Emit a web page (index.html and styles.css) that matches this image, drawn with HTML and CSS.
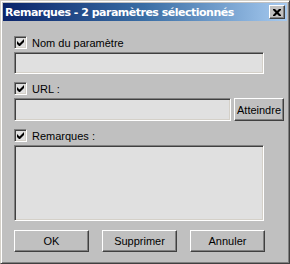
FILE: index.html
```html
<!DOCTYPE html>
<html lang="fr">
<head>
  <meta charset="UTF-8" />
  <title>Remarques</title>
  <link rel="stylesheet" href="styles.css">
</head>
<body>
  <div class="window">
    <div class="titlebar">
      <span class="title">Remarques - 2 paramètres sélectionnés</span>
      <span class="close">
        <svg width="8" height="7" viewBox="0 0 8 7"><path d="M0 0h2l2 2 2-2h2v1l-2.5 2.5L8 6v1H6L4 5 2 7H0V6l2.5-2.5L0 1z" fill="#000"/></svg>
      </span>
    </div>

    <div class="content">
      <div class="check-row">
        <span class="checkbox"><svg width="7" height="7" viewBox="0 0 7 7"><path d="M0 2v3l2 2h1l4-4V0L2.5 4.5z" fill="#000"/></svg></span>
        <span>Nom du paramètre</span>
      </div>
      <div class="field wide"></div>

      <div class="check-row spaced">
        <span class="checkbox"><svg width="7" height="7" viewBox="0 0 7 7"><path d="M0 2v3l2 2h1l4-4V0L2.5 4.5z" fill="#000"/></svg></span>
        <span>URL :</span>
      </div>
      <div class="url-row">
        <div class="field url"></div>
        <button class="btn small">Atteindre</button>
      </div>

      <div class="check-row spaced">
        <span class="checkbox"><svg width="7" height="7" viewBox="0 0 7 7"><path d="M0 2v3l2 2h1l4-4V0L2.5 4.5z" fill="#000"/></svg></span>
        <span>Remarques :</span>
      </div>
      <div class="field wide notes"></div>

      <div class="actions">
        <button class="btn">OK</button>
        <button class="btn">Supprimer</button>
        <button class="btn">Annuler</button>
      </div>
    </div>
  </div>
</body>
</html>
```

FILE: styles.css
```css
* {
  box-sizing: border-box;
}

body {
  margin: 0;
  background: #c0c0c0;
  font-family: 'Liberation Sans', Arial, sans-serif;
  font-size: 11px;
  color: #000;
}

.window {
  width: 290px;
  height: 264px;
  padding: 2px;
  background: #c0c0c0;
  border: 1px solid;
  border-color: #d4d0c8 #404040 #404040 #d4d0c8;
  box-shadow: inset 1px 1px #fff, inset -1px -1px #808080;
}

.titlebar {
  height: 18px;
  display: flex;
  align-items: center;
  justify-content: space-between;
  padding: 0 2px 0 2px;
  background: linear-gradient(90deg, #0a246a 0%, #3a6ea5 50%, #a6caf0 100%);
}

.title {
  color: #fff;
  font-family: 'DejaVu Sans', Verdana, sans-serif;
  font-weight: bold;
  font-size: 11px;
  letter-spacing: -0.5px;
  white-space: nowrap;
}

.close {
  width: 16px;
  height: 14px;
  display: flex;
  align-items: center;
  justify-content: center;
  background: #c0c0c0;
  border: 1px solid;
  border-color: #fff #404040 #404040 #fff;
  box-shadow: inset -1px -1px #808080;
}

.content {
  padding: 15px 3px 0 11px;
}

.check-row {
  display: flex;
  align-items: center;
  gap: 5px;
  height: 13px;
  margin-bottom: 3px;
}

.check-row.spaced {
  margin-top: 8px;
}

.checkbox {
  width: 13px;
  height: 13px;
  display: flex;
  align-items: center;
  justify-content: center;
  background: #e0e0e0;
  border: 1px solid;
  border-color: #808080 #fff #fff #808080;
  box-shadow: inset 1px 1px #404040, inset -1px -1px #d4d0c8;
}

.field {
  height: 22px;
  background: #e0e0e0;
  border: 1px solid;
  border-color: #808080 #fff #fff #808080;
  box-shadow: inset 1px 1px #404040, inset -1px -1px #d4d0c8;
}

.field.wide {
  width: 250px;
}

.field.notes {
  height: 76px;
}

.url-row {
  display: flex;
  gap: 3px;
}

.field.url {
  width: 217px;
  height: 23px;
}

.btn {
  height: 22px;
  width: 75px;
  padding: 0;
  font-family: 'Liberation Sans', Arial, sans-serif;
  font-size: 11px;
  color: #000;
  background: #c0c0c0;
  border: 1px solid;
  border-color: #fff #404040 #404040 #fff;
  box-shadow: inset -1px -1px #808080;
}

.btn.small {
  width: 50px;
  height: 23px;
}

.actions {
  display: flex;
  gap: 13px;
  margin-top: 9px;
}
```
